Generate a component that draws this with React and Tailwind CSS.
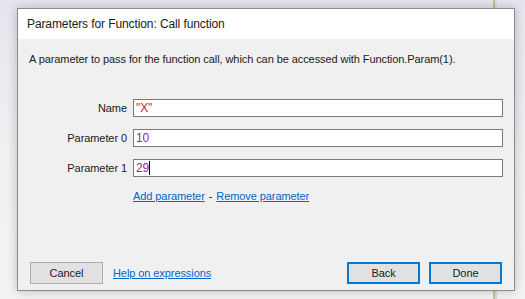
export default function App() {
  const font = { fontFamily: '"Liberation Sans", Arial, sans-serif' };
  return (
    <div
      className="relative w-[525px] h-[299px] overflow-hidden bg-gradient-to-b from-[#e6e6ee] via-[#f0f0f2] to-[#f3f3f3] pt-[8px] pl-[17px] text-[11px] tracking-[-0.08px] text-[#1a1a1a]"
      style={font}
    >
      <div className="absolute left-[493px] top-0 h-[299px] w-[2px] bg-[#bfc3a6]" />
      <div className="absolute left-[495px] top-0 h-[299px] w-[2px] bg-[#dcdcd6]" />
      <div className="relative w-[498px] h-[283px] border border-[#8a8a8a] bg-[#f0f0f0] flex flex-col shadow-[0_0_10px_rgba(0,0,0,0.22)]">
        <div className="h-[30px] bg-white flex items-center pl-[9px] leading-[16px] text-[12px] tracking-[-0.1px]">
          Parameters for Function: Call function
        </div>
        <div className="flex-1 flex flex-col">
          <div className="pt-[12px] pl-[11px] leading-[16px]">
            A parameter to pass for the function call, which can be accessed with Function.Param(1).
          </div>
          <div className="mt-[32px] flex flex-col gap-[12px] pr-[11px]">
            {[
              { label: "Name", value: '"X"', color: "text-[#a8323a]" },
              { label: "Parameter 0", value: "10", color: "text-[#8e2a9a]" },
              { label: "Parameter 1", value: "29", color: "text-[#8e2a9a]", caret: true },
            ].map((r) => (
              <div key={r.label} className="flex items-center h-[18px]">
                <div className="w-[109px] text-right leading-[16px]">{r.label}</div>
                <div className="ml-[6px] flex-1 h-[18px] border border-[#7a7a7a] bg-white flex items-center pl-[2px]">
                  <span className={`${r.color} leading-[16px] text-[12px]`}>{r.value}</span>
                  {r.caret && <span className="w-px h-[14px] bg-black" />}
                </div>
              </div>
            ))}
          </div>
          <div className="mt-[11px] pl-[115px] leading-[16px] flex items-center">
            <span className="text-[#0066cc] underline">Add parameter</span>
            <span className="mx-[4px]">-</span>
            <span className="text-[#0066cc] underline">Remove parameter</span>
          </div>
          <div className="mt-auto pb-[6px] px-[12px] flex items-center">
            <div className="w-[73px] h-[22px] bg-[#e1e1e1] border border-[#adadad] flex items-center justify-center">
              Cancel
            </div>
            <span className="ml-[10px] text-[#0066cc] underline leading-[16px]">Help on expressions</span>
            <div className="ml-auto w-[73px] h-[22px] bg-[#e1e1e1] border-2 border-[#0078d7] flex items-center justify-center">
              Back
            </div>
            <div className="ml-[9px] w-[73px] h-[22px] bg-[#e1e1e1] border-2 border-[#0078d7] flex items-center justify-center">
              Done
            </div>
          </div>
        </div>
      </div>
    </div>
  );
}
